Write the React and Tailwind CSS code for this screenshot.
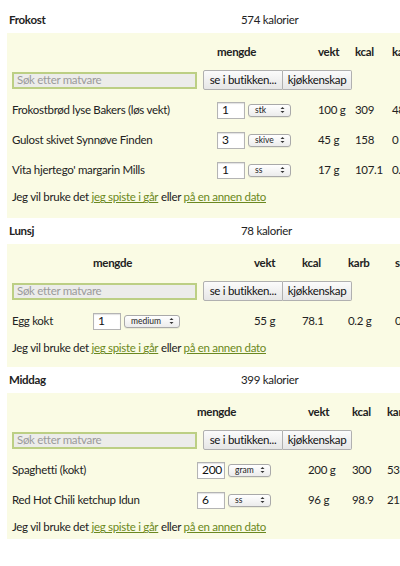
import React from 'react';

const font = { fontFamily: 'Lato, "Noto Sans", sans-serif' };

const sections = [
  {
    title: 'Frokost',
    kcal: '574 kalorier',
    cols: ['w-[205px]', 'w-[101px]', 'w-[37px]', 'w-[37px]', 'w-[60px]'],
    heads: ['', 'mengde', 'vekt', 'kcal', 'karb'],
    selW: 'w-[43px]',
    pb: 'pb-[9px]',
    rows: [
      ['Frokostbrød lyse Bakers (løs vekt)', '1', 'stk', '100 g', '309', '48 g'],
      ['Gulost skivet Synnøve Finden', '3', 'skive', '45 g', '158', '0 g'],
      ["Vita hjertego' margarin Mills", '1', 'ss', '17 g', '107.1', '0.1 g'],
    ],
  },
  {
    title: 'Lunsj',
    kcal: '78 kalorier',
    cols: ['w-[81px]', 'w-[161px]', 'w-[48px]', 'w-[46px]', 'w-[47px]', 'w-[60px]'],
    heads: ['', 'mengde', 'vekt', 'kcal', 'karb', 'sukker'],
    selW: 'w-[56px]',
    pb: 'pb-[7px]',
    rows: [['Egg kokt', '1', 'medium', '55 g', '78.1', '0.2 g', '0 g']],
  },
  {
    title: 'Middag',
    kcal: '399 kalorier',
    cols: ['w-[185px]', 'w-[111px]', 'w-[44px]', 'w-[35px]', 'w-[60px]'],
    heads: ['', 'mengde', 'vekt', 'kcal', 'karb'],
    selW: 'w-[43px]',
    pb: 'pb-0',
    rows: [
      ['Spaghetti (kokt)', '200', 'gram', '200 g', '300', '53 g'],
      ['Red Hot Chili ketchup Idun', '6', 'ss', '96 g', '98.9', '21.1 g'],
    ],
  },
];

function Select({ label, w }) {
  return (
    <div className={`${w} h-[13px] flex items-center justify-between pl-[6px] pr-[5px] rounded-[3px] border border-[#a9a9a9] bg-gradient-to-b from-white to-[#ececec] shadow-[0_1px_0_rgba(0,0,0,0.06)]`}>
      <span className="text-[8.5px] leading-none tracking-normal text-[#222]">{label}</span>
      <svg width="5" height="8" viewBox="0 0 5 8" className="shrink-0">
        <path d="M0.5 3 L2.5 1 L4.5 3 Z M0.5 5 L2.5 7 L4.5 5 Z" fill="#333" />
      </svg>
    </div>
  );
}

function Qty({ value }) {
  return (
    <div className="w-[28px] h-[17px] border border-[#b4b4b4] bg-white shadow-[inset_0_1px_1px_rgba(0,0,0,0.12)] pl-[4px] flex items-center text-[12px] text-[#111]">
      {value}
    </div>
  );
}

function Section({ s }) {
  return (
    <div>
      <div className="h-[26px] flex items-center">
        <div className="w-[241px] pl-[9px] font-bold text-[#222]">{s.title}</div>
        <div className="text-[#222]">{s.kcal}</div>
      </div>
      <div className={`ml-[7px] w-[460px] bg-[#fafbe4] pt-[8px] ${s.pb}`}>
        <div className="h-[22px] flex items-center pl-[5px] font-bold text-[#222]">
          {s.heads.map((h, i) => (
            <div key={i} className={`${s.cols[i]} shrink-0 whitespace-nowrap`}>{h}</div>
          ))}
        </div>
        <div className="h-[28px] mt-[3px] mb-[1px] flex items-center pl-[5px]">
          <div className="w-[185px] h-[17px] border-2 border-[#bccf84] bg-[#ececea] flex items-center pl-[3px] text-[#9a9a9a]">
            Søk etter matvare
          </div>
          <div className="ml-[6px] flex">
            <div className="h-[20px] w-[80px] flex items-center justify-center border border-[#b0b0b0] rounded-l-[2px] bg-gradient-to-b from-[#fbfbfb] to-[#e6e6e6] text-[#111]">
              se i butikken...
            </div>
            <div className="h-[20px] w-[69px] flex items-center justify-center border border-l-0 border-[#b0b0b0] rounded-r-[2px] bg-gradient-to-b from-[#fbfbfb] to-[#e6e6e6] text-[#111]">
              kjøkkenskap
            </div>
          </div>
        </div>
        {s.rows.map((r, ri) => (
          <div key={ri} className="h-[30px] flex items-center pl-[5px] text-[#222]">
            <div className={`${s.cols[0]} shrink-0 whitespace-nowrap`}>{r[0]}</div>
            <div className={`${s.cols[1]} shrink-0 flex items-center gap-[3px]`}>
              <Qty value={r[1]} />
              <Select label={r[2]} w={s.selW} />
            </div>
            {r.slice(3).map((v, vi) => (
              <div key={vi} className={`${s.cols[vi + 2]} shrink-0 whitespace-nowrap`}>{v}</div>
            ))}
          </div>
        ))}
        <div className="h-[24px] flex items-center pl-[5px] text-[#222] whitespace-nowrap">
          Jeg vil bruke det&nbsp;
          <a className="text-[#6b8820] underline">jeg spiste i går</a>
          &nbsp;eller&nbsp;
          <a className="text-[#6b8820] underline">på en annen dato</a>
        </div>
      </div>
    </div>
  );
}

export default function App() {
  return (
    <div className="w-[400px] h-[566px] overflow-hidden bg-white pt-[7px] text-[11.5px] tracking-[-0.3px]" style={font}>
      {sections.map((s) => (
        <Section key={s.title} s={s} />
      ))}
    </div>
  );
}
